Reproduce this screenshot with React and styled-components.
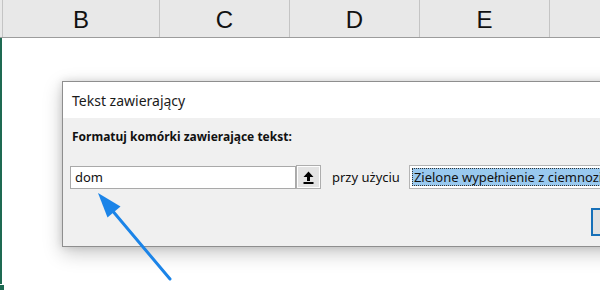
import React from 'react';
import styled, { createGlobalStyle } from 'styled-components';

const GlobalStyle = createGlobalStyle`
  html, body {
    margin: 0;
    padding: 0;
    background: #ffffff;
    overflow: hidden;
  }
  body {
    font-family: "Noto Sans", "Liberation Sans", sans-serif;
  }
`;

const COLUMNS = [
  { name: 'B', width: 157 },
  { name: 'C', width: 130 },
  { name: 'D', width: 130 },
  { name: 'E', width: 130 },
];

const App = () => {
  return (
    <Page>
      <GlobalStyle />
      <HeaderRow>
        <Corner />
        {COLUMNS.map(col => (
          <ColumnHeader key={col.name} $width={col.width}>
            {col.name}
          </ColumnHeader>
        ))}
        <HeaderFiller />
      </HeaderRow>

      <Sheet>
        <SelectionEdge>
          <EdgeLine />
          <EdgeHandle />
        </SelectionEdge>

        <SheetBody>
          <Dialog>
            <TitleBar>Tekst zawierający</TitleBar>
            <DialogBody>
              <FieldLabel>Formatuj komórki zawierające tekst:</FieldLabel>
              <FieldRow>
                <TextInput>dom</TextInput>
                <CollapseButton>
                  <svg width="11" height="13" viewBox="0 0 11 13">
                    <path d="M5.5 0.5 L10.5 6 L7 6 L7 10 L4 10 L4 6 L0.5 6 Z" fill="#000" />
                    <rect x="0.5" y="11" width="10" height="2" fill="#000" />
                  </svg>
                </CollapseButton>
                <RowText>przy użyciu</RowText>
                <Select>
                  <SelectValue>Zielone wypełnienie z ciemnozielonym tekstem</SelectValue>
                </Select>
              </FieldRow>
              <Footer>
                <DialogButton $primary />
              </Footer>
            </DialogBody>
          </Dialog>
        </SheetBody>
      </Sheet>

      <Pointer width="600" height="295" viewBox="0 0 600 295">
        <line x1="170" y1="279" x2="111" y2="209" stroke="#1b84e8" strokeWidth="3" strokeLinecap="round" />
        <polygon points="98,193 120.5,206.5 107.5,217.5" fill="#1b84e8" />
      </Pointer>
    </Page>
  );
};

const Page = styled.div`
  position: relative;
  width: 600px;
  height: 295px;
  overflow: hidden;
  background: #ffffff;
`;

const HeaderRow = styled.div`
  display: flex;
  height: 37px;
  background: #e8e8e8;
  border-bottom: 1px solid #9c9c9c;
`;

const Corner = styled.div`
  width: 2px;
  flex-shrink: 0;
  border-right: 1px solid #c4c4c4;
`;

const ColumnHeader = styled.div`
  flex-shrink: 0;
  width: ${props => props.$width}px;
  border-right: 1px solid #c4c4c4;
  display: flex;
  align-items: center;
  justify-content: center;
  font-family: "Liberation Sans", Arial, sans-serif;
  font-size: 24px;
  color: #111111;
  padding-top: 2px;
  box-sizing: border-box;
`;

const HeaderFiller = styled.div`
  flex: 1;
`;

const Sheet = styled.div`
  display: flex;
`;

const SelectionEdge = styled.div`
  display: flex;
  flex-direction: column;
  width: 4px;
  flex-shrink: 0;
`;

const EdgeLine = styled.div`
  width: 2px;
  height: 246px;
  background: #1e6a52;
`;

const EdgeHandle = styled.div`
  width: 4px;
  height: 5px;
  margin-top: 1px;
  background: #1e6a52;
`;

const SheetBody = styled.div`
  padding: 43px 0 0 58px;
`;

const Dialog = styled.div`
  width: 620px;
  border: 1px solid #8e8e8e;
  background: #f0f0f0;
  box-shadow: 0 6px 18px rgba(0, 0, 0, 0.22), 0 0 8px rgba(0, 0, 0, 0.12);
`;

const TitleBar = styled.div`
  height: 36px;
  display: flex;
  align-items: center;
  padding-left: 9px;
  background: #ffffff;
  font-size: 14px;
  color: #1a1a1a;
`;

const DialogBody = styled.div`
  display: flex;
  flex-direction: column;
  padding: 10px 0 10px 7px;
`;

const FieldLabel = styled.div`
  margin-left: 2px;
  font-size: 12px;
  font-weight: 700;
  color: #111111;
  line-height: 18px;
`;

const FieldRow = styled.div`
  display: flex;
  align-items: center;
  margin-top: 19px;
`;

const TextInput = styled.div`
  width: 226px;
  height: 23px;
  box-sizing: border-box;
  border: 1px solid #a9a9a9;
  background: #ffffff;
  padding-left: 4px;
  font-size: 13px;
  line-height: 21px;
  color: #111111;
`;

const CollapseButton = styled.div`
  width: 25px;
  height: 24px;
  box-sizing: border-box;
  border: 1px solid #adadad;
  box-shadow: inset 0 0 0 1px #fdfdfd;
  background: #e3e3e3;
  display: flex;
  align-items: center;
  justify-content: center;
`;

const RowText = styled.span`
  margin-left: 11px;
  font-size: 13px;
  color: #111111;
`;

const Select = styled.div`
  margin-left: 9px;
  width: 200px;
  height: 24px;
  box-sizing: border-box;
  border: 1px solid #b4b4b4;
  border-right: none;
  background: #ffffff;
  padding: 2px 0 2px 2px;
  display: flex;
  overflow: hidden;
`;

const SelectValue = styled.div`
  flex: 1;
  min-width: 0;
  background: #99c9ef;
  border: 1px dotted #333333;
  border-right: none;
  padding-left: 1px;
  font-size: 13px;
  line-height: 16px;
  color: #111111;
  white-space: nowrap;
  overflow: hidden;
`;

const Footer = styled.div`
  display: flex;
  margin-top: 19px;
  padding-left: 521px;
`;

const DialogButton = styled.div`
  width: 75px;
  height: 28px;
  box-sizing: border-box;
  border: ${props => props.$primary ? '2px solid #1770b8' : '1px solid #adadad'};
  background: #e1e1e1;
`;

const Pointer = styled.svg`
  position: absolute;
  left: 0;
  top: 0;
  pointer-events: none;
`;

export default App;
